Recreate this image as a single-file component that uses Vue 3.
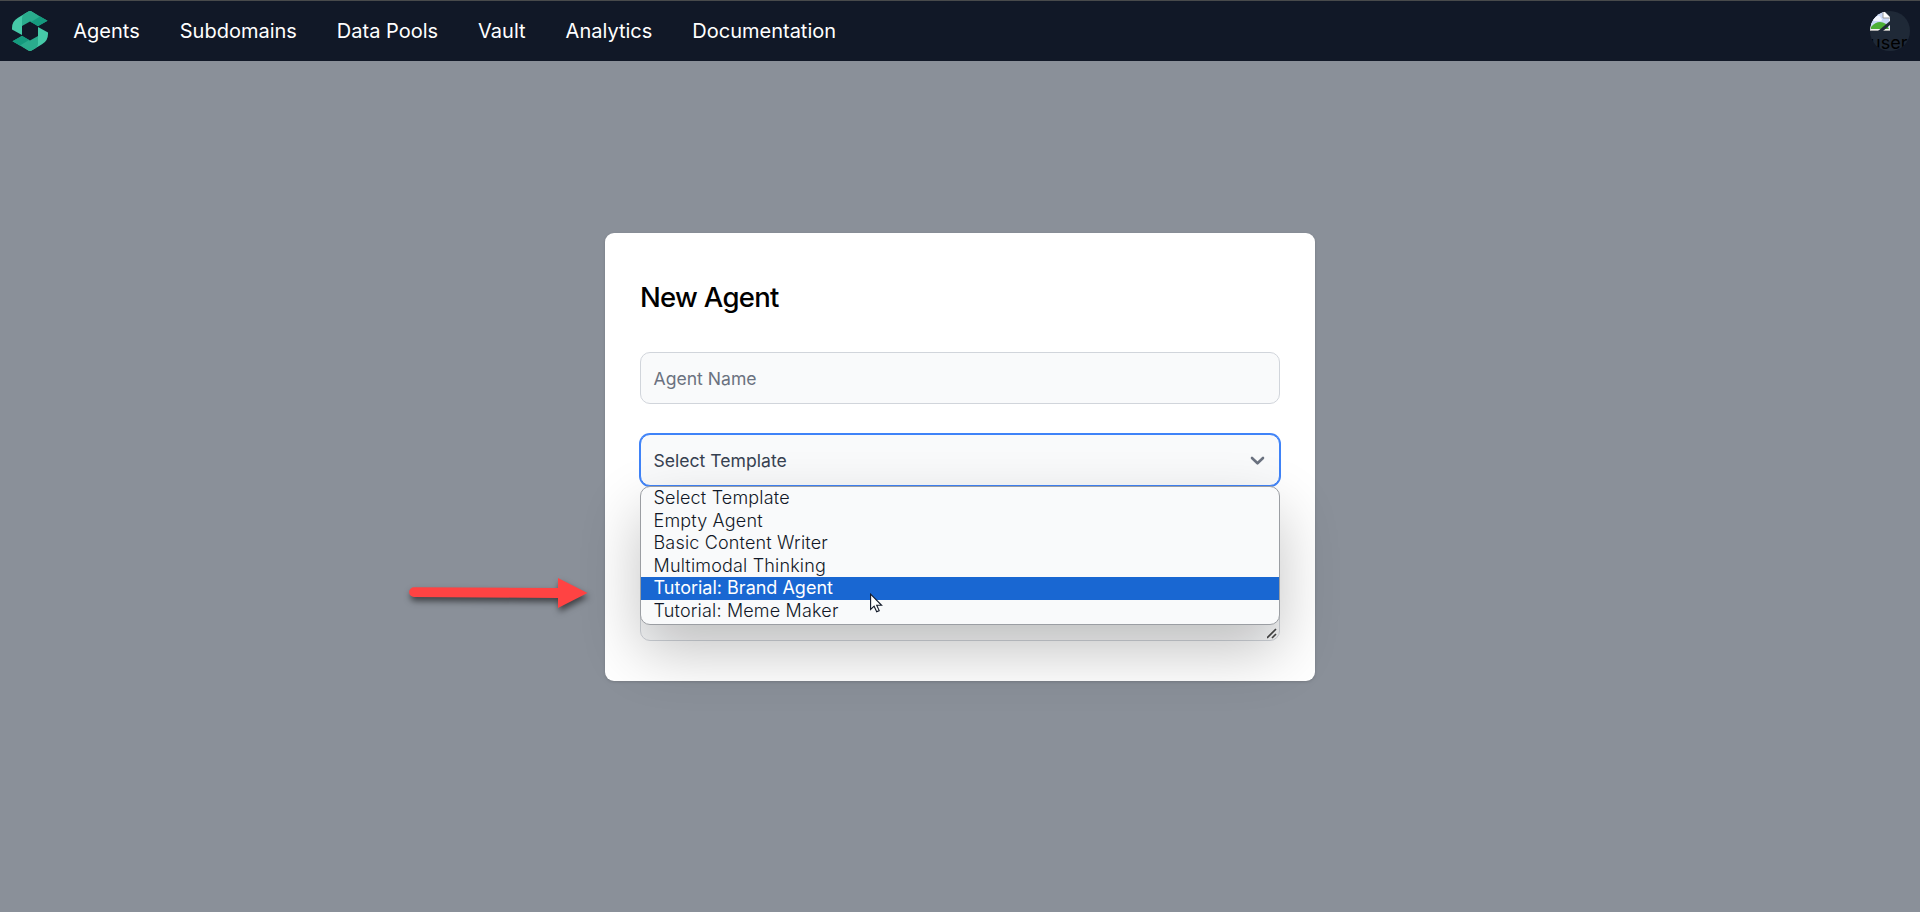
<script setup>
const links = ['Agents', 'Subdomains', 'Data Pools', 'Vault', 'Analytics', 'Documentation']
const templates = [
  'Select Template',
  'Empty Agent',
  'Basic Content Writer',
  'Multimodal Thinking',
  'Tutorial: Brand Agent',
  'Tutorial: Meme Maker',
]
const active = 4
</script>

<template>
  <div class="page">
    <header class="bar">
      <svg class="logo" width="36" height="40" viewBox="0 0 36 40">
        <path d="M0 17Q0 10 6 6.700L16 .7Q18 -.5 20 .7L25 4 10 13.500V24L0 18.500Z" fill="#46c9a8" />
        <path d="M10 15V7Q10 4.300 12.500 2.800L16 .7Q18 -.5 20 .7L35.500 9.700 26 15 18 10.500Z" fill="#2aac8d" />
        <path d="M19 11L28 5.400 35.500 9.700 26 15.300Z" fill="#159a7e" />
        <path d="M36 23Q36 30 30 33.300L20 39.300Q18 40.500 16 39.300L11 36 26 26.500V16L36 21.500Z" fill="#46c9a8" />
        <path d="M26 25V33Q26 35.700 23.500 37.200L20 39.300Q18 40.500 16 39.300L.5 30.300 10 25 18 29.500Z" fill="#2aac8d" />
        <path d="M.5 30.300L10 24.700 17 29 8 34.600Z" fill="#159a7e" />
      </svg>
      <nav class="links">
        <a v-for="link in links" :key="link">{{ link }}</a>
      </nav>
      <div class="avatar">
        <svg width="20" height="20" viewBox="0 0 20 20">
          <path d="M0 0H14L20 6V20H0Z" fill="#f1f1f1" />
          <path d="M1 1H13V7H19V18H1Z" fill="#c9d8f8" />
          <path d="M1 18V16Q8 8 16 13L19 18Z" fill="#4caf36" />
          <path d="M3 9Q3 6 6 6 9 3 11 7 13 9 11 10H4Z" fill="#f4f7ff" />
          <path d="M13 0V7H20" fill="#fff" stroke="#999" stroke-width="1" />
          <path d="M0 19.500H20" stroke="#aaa" />
          <path d="M8 20L20 10V14L13 20Z" fill="#1f2937" />
        </svg>
        <span>user</span>
      </div>
    </header>

    <main class="stage">
      <section class="card">
        <h1>New Agent</h1>
        <div class="field name">Agent Name</div>
        <div class="picker">
          <div class="field select">
            <span>Select Template</span>
            <svg width="15" height="10" viewBox="0 0 15 10">
              <path d="M2 2L7.500 7.300 13 2" fill="none" stroke="#6b7280" stroke-width="2.600" stroke-linecap="round" stroke-linejoin="round" />
            </svg>
          </div>
          <ul class="menu">
            <li v-for="(item, i) in templates" :key="item" :class="{ active: i === active }">
              <span>{{ item }}</span>
            </li>
          </ul>
        </div>
        <div class="field area">
          <svg width="11" height="11" viewBox="0 0 11 11">
            <path d="M0 10L9 1M5 10L9 6" stroke="#484848" stroke-width="1.700" fill="none" />
          </svg>
        </div>
      </section>
    </main>

    <svg class="arrow" width="200" height="50" viewBox="0 0 200 50">
      <path d="M14 12.200L158 13V3L187.500 18 158 33V23L14 22A4.900 4.900 0 0 1 14 12.200Z" fill="#ff4343" />
    </svg>
    <svg class="cursor" width="14" height="21" viewBox="0 0 14 21">
      <path d="M.6 1.200V16.500L4.100 13.200 6.700 18.700 9.200 17.600 6.700 12.300H11.600Z" fill="#fff" stroke="#111827" stroke-width="1.100" />
    </svg>
  </div>
</template>

<style>
body {
  margin: 0;
  overflow: hidden;
}
</style>

<style scoped>
.page {
  position: relative;
  height: 912px;
  display: flex;
  flex-direction: column;
  overflow: hidden;
  background: #8a9099;
  font-family: Inter, "Liberation Sans", sans-serif;
}
.bar {
  box-sizing: border-box;
  height: 61px;
  flex: none;
  display: flex;
  align-items: center;
  padding: 0 10px 0 12px;
  border-top: 1px solid #484a4b;
  background: #111827;
}
.links {
  display: flex;
  gap: 40px;
  margin-left: 25.300px;
  color: #fff;
  font-size: 20px;
  line-height: 30px;
}
.avatar {
  width: 40px;
  height: 40px;
  margin-left: auto;
  border-radius: 50%;
  overflow: hidden;
  background: #1f2937;
  color: #000;
  font-size: 18px;
  line-height: 24px;
}
.avatar svg,
.avatar span {
  display: block;
}
.stage {
  flex: 1;
  display: flex;
  justify-content: center;
  align-items: flex-start;
  padding-top: 172px;
}
.card {
  box-sizing: border-box;
  width: 710px;
  height: 448px;
  padding: 44px 35px 0;
  border-radius: 9px;
  background: #fff;
  box-shadow: 0 1px 3px rgba(0, 0, 0, 0.15);
}
h1 {
  margin: 0 0 35px;
  font-size: 27.500px;
  font-weight: 500;
  line-height: 40px;
  letter-spacing: -0.700px;
  color: #000;
}
.field {
  box-sizing: border-box;
  display: flex;
  align-items: center;
  border: 1px solid #d1d5db;
  border-radius: 10px;
  padding: 0 14px 0 12.500px;
  background: #f9fafb;
  font-size: 17.600px;
}
.name {
  height: 52px;
  color: #6b7280;
}
.picker {
  position: relative;
  z-index: 1;
  margin-top: 30px;
}
.select {
  height: 52px;
  justify-content: space-between;
  border-color: #3f83f8;
  box-shadow: 0 0 0 1px #3f83f8;
  color: #374151;
}
.select svg {
  margin-top: 2px;
}
.area {
  height: 125px;
  margin-top: 30px;
  align-items: flex-end;
  justify-content: flex-end;
  padding: 0 1px 1px;
}
.menu {
  box-sizing: border-box;
  position: absolute;
  top: 52px;
  left: 0;
  width: 640px;
  height: 139px;
  margin: 0;
  padding: 0;
  list-style: none;
  overflow: hidden;
  border: 1px solid #9b9ea3;
  border-radius: 10px;
  background: #f9fafb;
  box-shadow: 0 26px 60px rgba(0, 0, 0, 0.24);
}
.menu li {
  height: 22.600px;
  padding-left: 12.500px;
  line-height: 22.600px;
  font-size: 18px;
  font-weight: 350;
  letter-spacing: 0.170px;
  color: #111827;
}
.menu li.active {
  background: #1967d2;
  color: #fff;
  font-weight: 400;
  letter-spacing: 0;
}
.arrow {
  position: absolute;
  left: 400px;
  top: 575px;
  filter: drop-shadow(1px 4px 3px rgba(0, 0, 0, 0.55));
}
.cursor {
  position: absolute;
  z-index: 2;
  left: 870px;
  top: 593px;
}
</style>
